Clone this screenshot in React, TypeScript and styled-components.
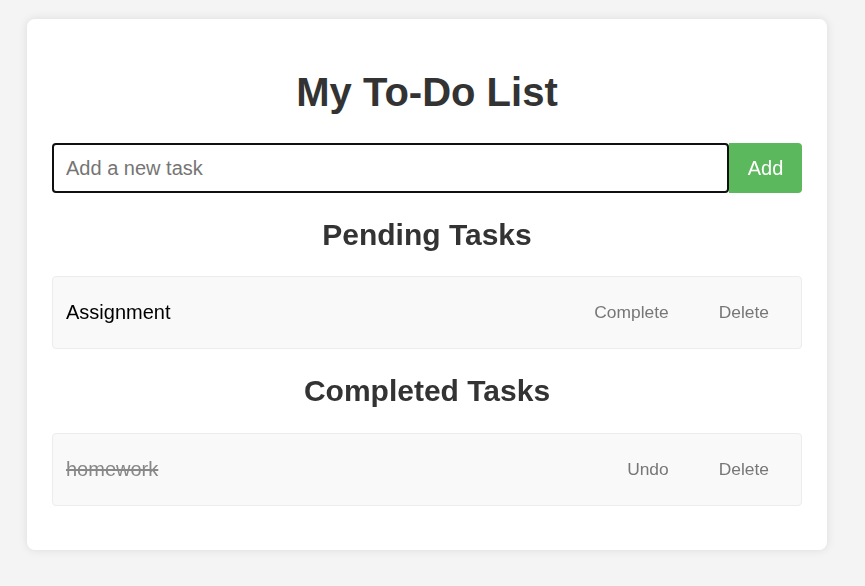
import React from "react";
import styled, { createGlobalStyle } from "styled-components";

const Global = createGlobalStyle`
  html, body { margin: 0; padding: 0; background: #f4f4f4; }
  body { font-family: "Liberation Sans", Arial, sans-serif; }
  * { box-sizing: border-box; }
`;

const Page = styled.div`
  padding: 19px 0 36px 27px;
`;

const Card = styled.div`
  width: 800px;
  background: #fff;
  border-radius: 8px;
  box-shadow: 0 0 10px rgba(0, 0, 0, 0.1);
  padding: 25px 25px 44px;
`;

const Title = styled.h1`
  margin: 26px 0 28px;
  text-align: center;
  font-size: 40px;
  font-weight: bold;
  color: #333;
`;

const InputRow = styled.div`
  display: flex;
`;

const TaskInput = styled.input`
  flex: 1;
  height: 50px;
  padding: 0 12px;
  font-size: 20px;
  font-family: "Liberation Sans", Arial, sans-serif;
  border: 2px solid #101010;
  border-radius: 4px;
  outline: none;
  color: #000;
  &::placeholder { color: #757575; }
`;

const AddButton = styled.button`
  width: 73px;
  height: 50px;
  border: none;
  background: #5cb85c;
  color: #fff;
  font-size: 20px;
  font-family: "Liberation Sans", Arial, sans-serif;
  border-radius: 0 4px 4px 0;
  cursor: pointer;
`;

const SectionTitle = styled.h2<{ $extra?: number }>`
  margin: 25px 0 ${(p) => 24 + (p.$extra ?? 0)}px;
  text-align: center;
  font-size: 30px;
  font-weight: bold;
  color: #333;
`;

const List = styled.ul`
  list-style: none;
  margin: 0;
  padding: 0;
`;

const Item = styled.li`
  display: flex;
  align-items: center;
  height: 73px;
  padding: 0 12px 0 13px;
  background: #f9f9f9;
  border: 1px solid #ececec;
  border-radius: 4px;
`;

const ItemText = styled.span<{ $done?: boolean }>`
  flex: 1;
  font-size: 20px;
  color: ${(p) => (p.$done ? "#888" : "#000")};
  text-decoration: ${(p) => (p.$done ? "line-through" : "none")};
`;

const Action = styled.button`
  background: none;
  border: none;
  padding: 12px 20px;
  margin-left: 10px;
  font-size: 17.4px;
  font-family: "Liberation Sans", Arial, sans-serif;
  color: #777;
  cursor: pointer;
`;

export default function App() {
  return (
    <>
      <Global />
      <Page>
        <Card>
          <Title>My To-Do List</Title>
          <InputRow>
            <TaskInput placeholder="Add a new task" autoFocus />
            <AddButton>Add</AddButton>
          </InputRow>
          <SectionTitle>Pending Tasks</SectionTitle>
          <List>
            <Item>
              <ItemText>Assignment</ItemText>
              <Action>Complete</Action>
              <Action>Delete</Action>
            </Item>
          </List>
          <SectionTitle $extra={1}>Completed Tasks</SectionTitle>
          <List>
            <Item>
              <ItemText $done>homework</ItemText>
              <Action>Undo</Action>
              <Action>Delete</Action>
            </Item>
          </List>
        </Card>
      </Page>
    </>
  );
}
